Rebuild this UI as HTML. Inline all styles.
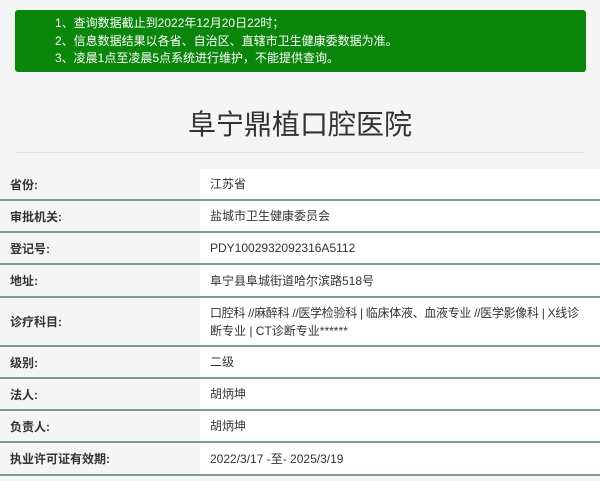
<!DOCTYPE html>
<html><head><meta charset="utf-8"><style>
body{margin:0;background:#f5f5f5;font-family:"Liberation Sans","Noto Sans CJK SC",sans-serif;width:600px;height:481px;overflow:hidden;position:relative}
.notice{position:absolute;left:15px;top:10px;width:571px;height:62px;background:#0a870a;border-radius:3px;color:#fff;font-size:12px;line-height:17.5px;box-sizing:border-box;padding:5px 0 0 40px}
h1{position:absolute;top:105px;left:0;width:600px;text-align:center;margin:0;font-weight:normal;font-size:28px;color:#333;line-height:40px}
.hr{position:absolute;left:15px;width:570px;top:152px;height:1px;background:#e6e6e6}
table{position:absolute;top:169px;left:0;width:600px;border-collapse:collapse;font-size:12px;color:#333}
td{border-bottom:2px solid #819b94;padding:0 10px;vertical-align:middle}
td.l{width:180px;font-weight:bold;background:#f5f5f5}
td.v{background:#fff;line-height:18px;padding-right:6px}
</style></head><body>
<div class="notice">1、查询数据截止到2022年12月20日22时；<br>2、信息数据结果以各省、自治区、直辖市卫生健康委数据为准。<br>3、凌晨1点至凌晨5点系统进行维护，不能提供查询。</div>
<h1>阜宁鼎植口腔医院</h1>
<div class="hr"></div>
<table>
<tr style="height:31px"><td class="l">省份:</td><td class="v">江苏省</td></tr>
<tr style="height:32px"><td class="l">审批机关:</td><td class="v">盐城市卫生健康委员会</td></tr>
<tr style="height:32px"><td class="l">登记号:</td><td class="v">PDY1002932092316A5112</td></tr>
<tr style="height:33px"><td class="l">地址:</td><td class="v">阜宁县阜城街道哈尔滨路518号</td></tr>
<tr style="height:49px"><td class="l">诊疗科目:</td><td class="v"><span style="letter-spacing:-0.3px">口腔科 //麻醉科 //医学检验科 | 临床体液、血液专业 //医学影像科 | X线诊</span><br>断专业 | CT诊断专业******</td></tr>
<tr style="height:32px"><td class="l">级别:</td><td class="v">二级</td></tr>
<tr style="height:32px"><td class="l">法人:</td><td class="v">胡炳坤</td></tr>
<tr style="height:32px"><td class="l">负责人:</td><td class="v">胡炳坤</td></tr>
<tr style="height:33px"><td class="l">执业许可证有效期:</td><td class="v">2022/3/17 -至- 2025/3/19</td></tr>
</table>
</body></html>
